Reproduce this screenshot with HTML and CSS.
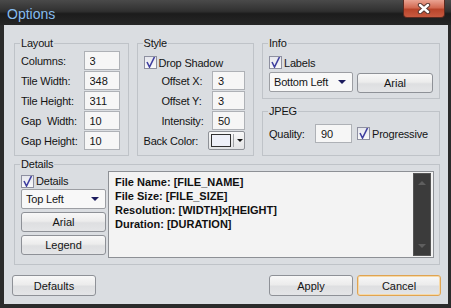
FILE: index.html
```html
<!DOCTYPE html>
<html>

<head>
    <title>Options</title>
    <meta name="viewport" content="width=device-width, initial-scale=1.0">
    <link rel="stylesheet" href="styles.css">
</head>

<body>
    <div class="window">
        <header class="titlebar">
            <span class="title">Options</span>
            <button class="close" aria-label="Close">
                <svg width="14" height="11" viewBox="0 0 14 11">
                    <path d="M3 2 L11 9 M11 2 L3 9" stroke="#5a3a34" stroke-width="4.4" stroke-linecap="round" />
                    <path d="M3 2 L11 9 M11 2 L3 9" stroke="#fff" stroke-width="2.4" stroke-linecap="round" />
                </svg>
            </button>
        </header>

        <main class="client">
            <div class="top-row">
                <fieldset class="group layout">
                    <legend>Layout</legend>
                    <div class="rows">
                        <div class="row"><label>Columns:</label><input class="num" value="3"></div>
                        <div class="row"><label>Tile Width:</label><input class="num" value="348"></div>
                        <div class="row"><label>Tile Height:</label><input class="num" value="311"></div>
                        <div class="row"><label>Gap&nbsp; Width:</label><input class="num" value="10"></div>
                        <div class="row"><label>Gap Height:</label><input class="num" value="10"></div>
                    </div>
                </fieldset>

                <fieldset class="group style">
                    <legend>Style</legend>
                    <div class="rows">
                        <div class="check"><span class="box checked"></span>Drop Shadow</div>
                        <div class="row indent"><label>Offset X:</label><input class="num" value="3"></div>
                        <div class="row indent"><label>Offset Y:</label><input class="num" value="3"></div>
                        <div class="row indent"><label>Intensity:</label><input class="num" value="50"></div>
                        <div class="row">
                            <label>Back Color:</label>
                            <button class="color-btn"><span class="swatch"></span><span class="arrow"></span></button>
                        </div>
                    </div>
                </fieldset>

                <div class="right-col">
                    <fieldset class="group info">
                        <legend>Info</legend>
                        <div class="check"><span class="box checked"></span>Labels</div>
                        <div class="info-row">
                            <div class="select wide">Bottom Left<span class="arrow"></span></div>
                            <button class="btn font-btn">Arial</button>
                        </div>
                    </fieldset>

                    <fieldset class="group jpeg">
                        <legend>JPEG</legend>
                        <div class="row">
                            <label class="quality">Quality:</label>
                            <input class="num q" value="90">
                            <div class="check inline"><span class="box checked"></span>Progressive</div>
                        </div>
                    </fieldset>
                </div>
            </div>

            <fieldset class="group details">
                <legend>Details</legend>
                <div class="details-grid">
                    <div class="side">
                        <div class="check small"><span class="box checked"></span>Details</div>
                        <div class="select">Top Left<span class="arrow"></span></div>
                        <button class="btn">Arial</button>
                        <button class="btn">Legend</button>
                    </div>
                    <div class="memo">
                        <div class="memo-text">
                            File Name: [FILE_NAME]<br>
                            File Size: [FILE_SIZE]<br>
                            Resolution: [WIDTH]x[HEIGHT]<br>
                            Duration: [DURATION]
                        </div>
                        <div class="scrollbar">
                            <span class="up"></span>
                            <span class="down"></span>
                        </div>
                    </div>
                </div>
            </fieldset>

            <footer class="buttons">
                <button class="btn big">Defaults</button>
                <span class="spacer"></span>
                <button class="btn big">Apply</button>
                <button class="btn big default">Cancel</button>
            </footer>
        </main>
    </div>
</body>

</html>
```

FILE: styles.css
```css
* { box-sizing: border-box; }
body { margin: 0; background: #2a2a2a; font-family: "Liberation Sans", Arial, sans-serif; font-size: 11px; letter-spacing: -0.2px; color: #141414; }

.window { width: 451px; height: 308px; display: flex; flex-direction: column; background: #2b2b2b; }
.titlebar { height: 25px; display: flex; justify-content: space-between; align-items: flex-start; padding-left: 7px; background: linear-gradient(#4a4a4a, #303030 45%, #1c1c1c 55%, #262626); }
.title { font-size: 14px; line-height: 16px; padding-top: 6px; letter-spacing: 0; color: #86bcee; }
.close { width: 42px; height: 18px; margin-right: 6px; padding: 0; border: 1px solid #5a2a20; border-top: none; border-radius: 0 0 4px 4px; display: flex; align-items: center; justify-content: center; background: linear-gradient(#eaa392, #d26a52 45%, #b8442a 55%, #c85a40); }

.client { flex: 1; margin: 0 3px 4px 4px; padding: 12px 8px 0 10px; background: #dadde1; }

.top-row { display: flex; gap: 8px; }
.group { margin: 0; padding: 1px 8px 5px 6px; border: 1px solid #bfc3c8; min-width: 0; }
.group legend { padding: 0 1px; margin-left: -1px; line-height: 13px; }
.layout { width: 115px; }
.style { width: 118px; }
.right-col { width: 178px; display: flex; flex-direction: column; gap: 6px; }
.info { padding-right: 6px; }
.jpeg { flex: 1; padding-top: 6px; padding-right: 6px; }
.jpeg .row { justify-content: flex-start; }

.rows { display: flex; flex-direction: column; gap: 1px; }
.row { display: flex; align-items: center; justify-content: space-between; height: 19px; }
.row.indent label { margin-left: 18px; }
.num { width: 36px; height: 19px; padding: 0 5px; border: 1px solid #aeb1b6; background: #f6f6f6; font: inherit; color: #141414; }
.style .num { width: 33px; }

.check { display: flex; align-items: center; gap: 2px; height: 19px; padding-top: 4px; }
.check.inline { padding-top: 0; margin-left: 5px; }
.check.small { height: 18px; padding-top: 2px; }
.box { width: 13px; height: 13px; border: 1px solid #8e90a0; background: linear-gradient(#e6e7ee, #fafafa); }
.box.checked { background: url("data:image/svg+xml,%3Csvg xmlns='http://www.w3.org/2000/svg' width='11' height='11'%3E%3Cpath d='M2 5 L4.5 10 L9.5 0' fill='none' stroke='%234040a0' stroke-width='1.6'/%3E%3C/svg%3E") no-repeat center, linear-gradient(#e6e7ee, #fafafa); }

.info-row { display: flex; gap: 4px; margin-top: 2px; align-items: flex-start; }
.select { height: 20px; display: flex; align-items: center; justify-content: space-between; padding: 0 6px 0 4px; border: 1px solid #9c9ea3; border-radius: 2px; background: #f8f8f8; }
.select.wide { width: 84px; }
.select .arrow { width: 0; height: 0; border-left: 4px solid transparent; border-right: 4px solid transparent; border-top: 4px solid #1c1c5e; }
.quality { width: 46px; }
.num.q { width: 37px; }

.btn { height: 20px; padding: 0; border: 1px solid #8e9197; border-radius: 3px; font: inherit; color: #141414; background: linear-gradient(#f8f8f8, #ececec 45%, #dedfe1 55%, #e4e5e7); }
.font-btn { width: 76px; margin-top: 1px; }

.color-btn { width: 37px; height: 19px; padding: 2px; display: flex; align-items: center; gap: 2px; border: 1px solid #8e9197; border-radius: 2px; background: linear-gradient(#f8f8f8, #e2e3e5); }
.swatch { width: 20px; height: 13px; border: 1px solid #303030; background: #eef0f8; }
.color-btn .arrow { height: 13px; flex: 1; border-left: 1px solid #a0a2a6; position: relative; }
.color-btn .arrow::after { content: ""; position: absolute; left: 3px; top: 5px; border-left: 3px solid transparent; border-right: 3px solid transparent; border-top: 3px solid #141414; }

.details { margin-top: 2px; padding: 0 5px 6px 6px; }
.details-grid { display: grid; grid-template-columns: 85px 1fr; column-gap: 2px; }
.side { display: flex; flex-direction: column; gap: 3px; }
.side .check { margin-bottom: -3px; }
.memo { height: 87px; display: flex; border: 1px solid #8d9095; background: #f3f3f3; padding: 1px 2px 1px 0; }
.memo-text { flex: 1; padding: 2px 6px; font-weight: bold; line-height: 14px; letter-spacing: 0; color: #101010; }
.scrollbar { width: 18px; display: flex; flex-direction: column; justify-content: space-between; align-items: center; padding: 7px 0; background: #3b3b3b; border: 1px solid #555; }
.scrollbar span { width: 0; height: 0; border-left: 4px solid transparent; border-right: 4px solid transparent; }
.scrollbar .up { border-bottom: 4px solid #5e5e5e; }
.scrollbar .down { border-top: 4px solid #5e5e5e; }

.buttons { display: flex; gap: 4px; margin: 10px -1px 0 -2px; }
.spacer { flex: 1; }
.btn.big { width: 84px; height: 21px; }
.btn.default { border-color: #e0a452; box-shadow: inset 0 0 0 1px #f6d9a8; }
```
